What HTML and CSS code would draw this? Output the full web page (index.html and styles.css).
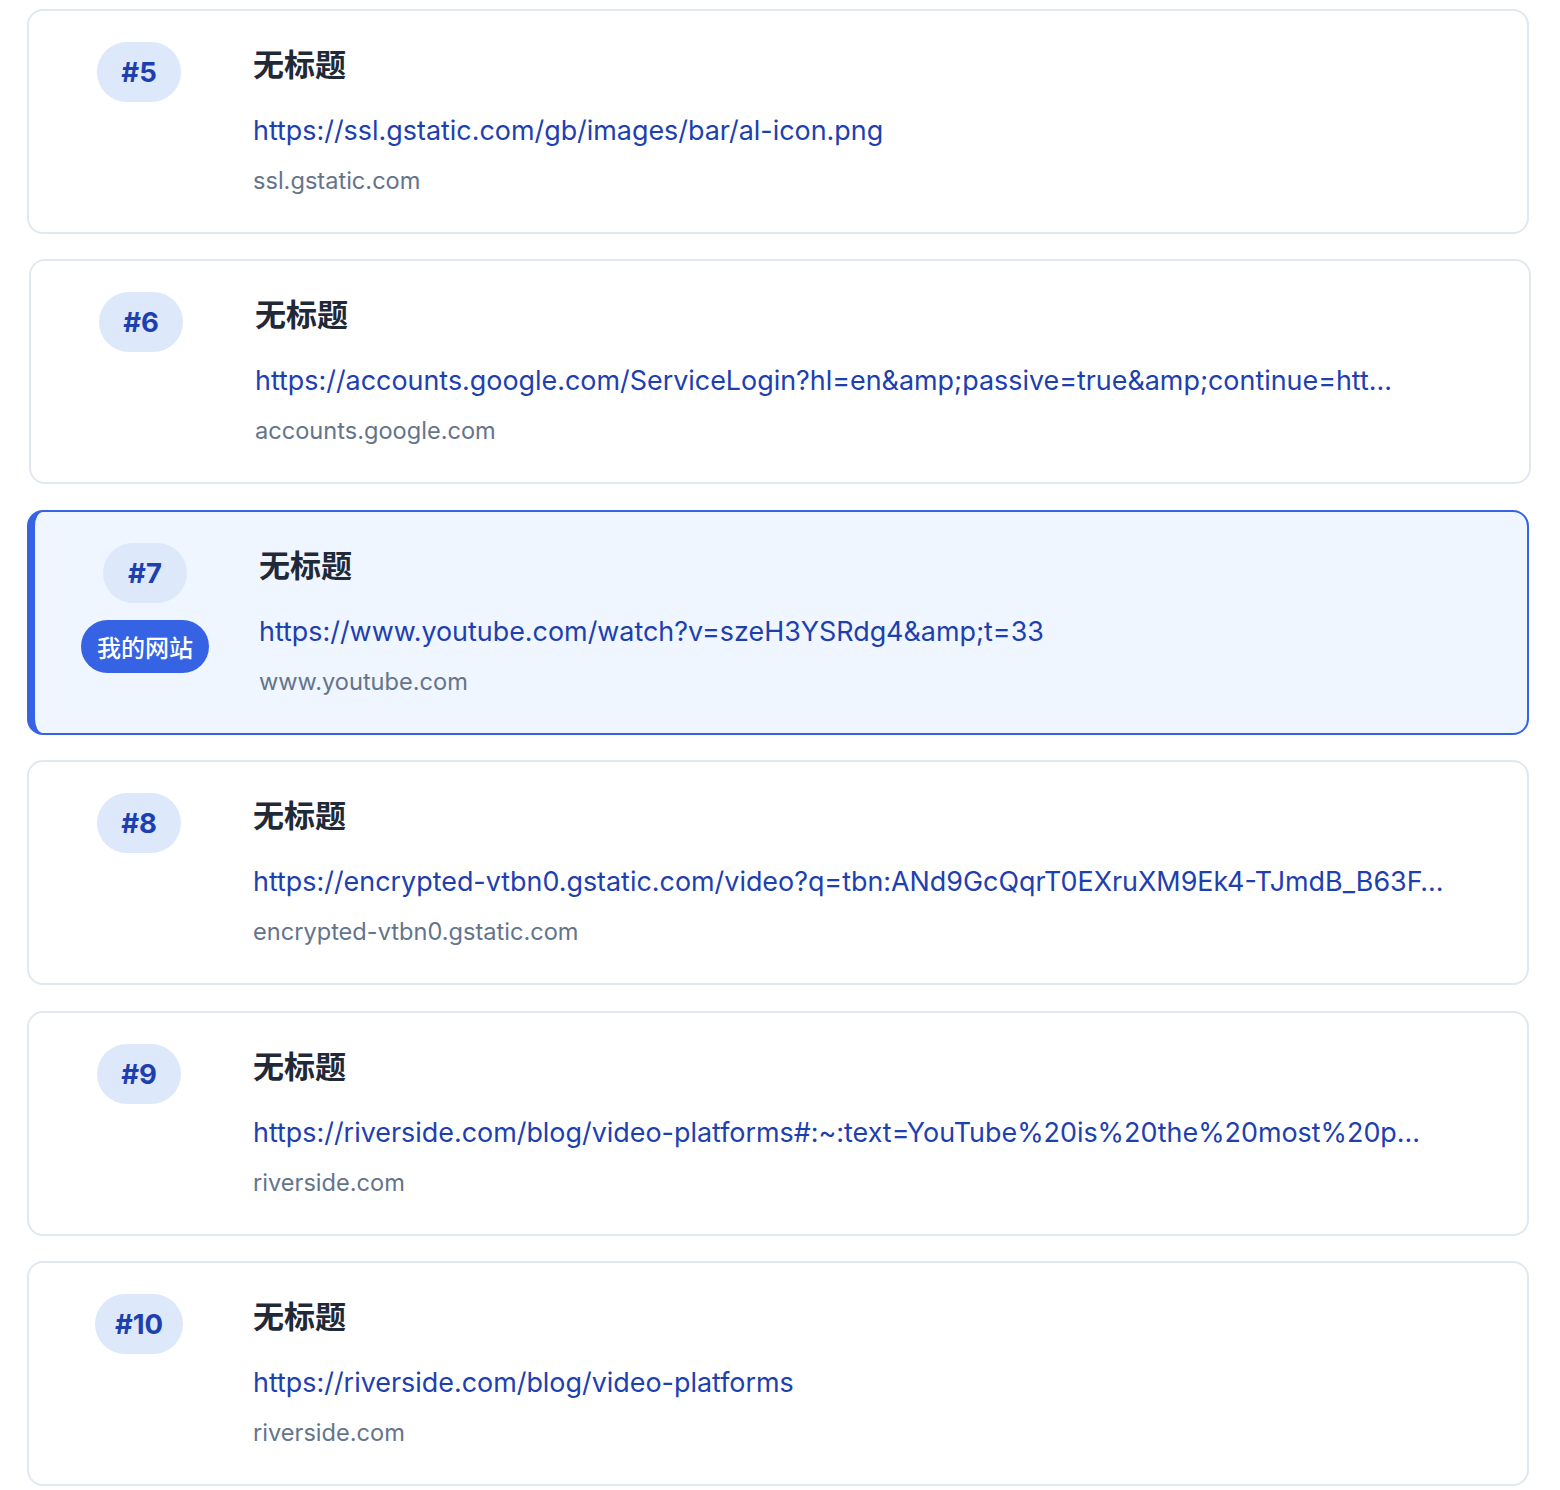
FILE: index.html
```html
<!DOCTYPE html>
<html lang="zh">
<head>
<meta charset="utf-8">
<title>列表</title>
<link rel="stylesheet" href="styles.css">
</head>
<body>
<div class="list">
  <div class="card">
    <div class="side"><span class="num">#5</span></div>
    <div class="main">
      <div class="title">无标题</div>
      <div class="url">https://ssl.gstatic.com/gb/images/bar/al-icon.png</div>
      <div class="domain">ssl.gstatic.com</div>
    </div>
  </div>
  <div class="card shifted">
    <div class="side"><span class="num">#6</span></div>
    <div class="main">
      <div class="title">无标题</div>
      <div class="url">https://accounts.google.com/ServiceLogin?hl=en&amp;amp;passive=true&amp;amp;continue=htt…</div>
      <div class="domain">accounts.google.com</div>
    </div>
  </div>
  <div class="card active">
    <div class="side"><span class="num">#7</span><span class="tag">我的网站</span></div>
    <div class="main">
      <div class="title">无标题</div>
      <div class="url">https://www.youtube.com/watch?v=szeH3YSRdg4&amp;amp;t=33</div>
      <div class="domain">www.youtube.com</div>
    </div>
  </div>
  <div class="card">
    <div class="side"><span class="num">#8</span></div>
    <div class="main">
      <div class="title">无标题</div>
      <div class="url">https://encrypted-vtbn0.gstatic.com/video?q=tbn:ANd9GcQqrT0EXruXM9Ek4-TJmdB_B63F…</div>
      <div class="domain">encrypted-vtbn0.gstatic.com</div>
    </div>
  </div>
  <div class="card">
    <div class="side"><span class="num">#9</span></div>
    <div class="main">
      <div class="title">无标题</div>
      <div class="url">https://riverside.com/blog/video-platforms#:~:text=YouTube%20is%20the%20most%20p…</div>
      <div class="domain">riverside.com</div>
    </div>
  </div>
  <div class="card">
    <div class="side"><span class="num">#10</span></div>
    <div class="main">
      <div class="title">无标题</div>
      <div class="url">https://riverside.com/blog/video-platforms</div>
      <div class="domain">riverside.com</div>
    </div>
  </div>
</div>
</body>
</html>
```
FILE: styles.css
```css
html, body {
  margin: 0;
  padding: 0;
  background: #ffffff;
}

body {
  font-family: Inter, "Noto Sans CJK SC", sans-serif;
}

.list {
  width: 1502px;
  padding: 9px 0 0 27px;
  display: flex;
  flex-direction: column;
  gap: 25.4px;
}

.card {
  box-sizing: border-box;
  width: 1502px;
  height: 225px;
  display: flex;
  gap: 34px;
  border: 2px solid #e2e8f0;
  border-radius: 16px;
  background: #ffffff;
  padding: 31px 40px 0 30px;
}

.card.shifted {
  transform: translateX(2px);
}

.card.active {
  border-color: #3563e4;
  border-left-width: 8px;
  background: #eff6ff;
}

.side {
  flex: 0 0 160px;
  display: flex;
  flex-direction: column;
  align-items: center;
  gap: 17px;
}

.num {
  display: inline-flex;
  align-items: center;
  justify-content: center;
  height: 60px;
  padding: 0 20px;
  min-width: 44px;
  border-radius: 30px;
  background: #dde8fb;
  color: #1e40af;
  font-size: 27.5px;
  font-weight: 700;
}

.tag {
  display: inline-flex;
  align-items: center;
  height: 53px;
  padding: 0 16px;
  border-radius: 27px;
  background: #3563e4;
  color: #ffffff;
  font-family: "Noto Sans CJK SC", sans-serif;
  font-size: 24px;
  font-weight: 500;
}

.main {
  flex: 1;
  min-width: 0;
}

.title {
  font-family: "Noto Sans CJK SC", sans-serif;
  font-size: 31px;
  font-weight: 700;
  line-height: 42px;
  color: #1f2937;
}

.url {
  margin-top: 28px;
  font-size: 26.9px;
  line-height: 36px;
  color: #1e40af;
  white-space: nowrap;
}

.domain {
  margin-top: 18px;
  font-size: 23.6px;
  line-height: 30px;
  color: #64748b;
}
```
